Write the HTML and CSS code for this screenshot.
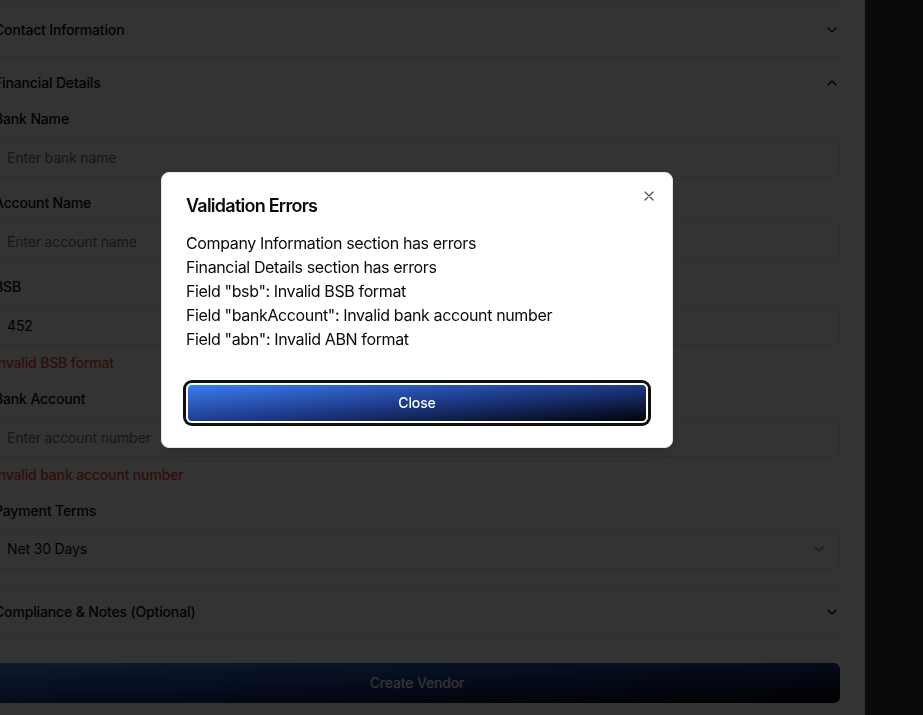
FILE: index.html
```html
<!DOCTYPE html>
<html lang="en">
<head>
<meta charset="utf-8">
<title>Create Vendor</title>
<link rel="stylesheet" href="styles.css">
</head>
<body>
<div class="page">
  <main class="card">
    <form class="form">
      <div class="acc-item">
        <button type="button" class="acc-trigger">Company Information
          <svg class="chev" viewBox="0 0 24 24" width="16" height="16"><path d="m6 9 6 6 6-6"/></svg>
        </button>
      </div>
      <div class="acc-item">
        <button type="button" class="acc-trigger">Contact Information
          <svg class="chev" viewBox="0 0 24 24" width="16" height="16"><path d="m6 9 6 6 6-6"/></svg>
        </button>
      </div>
      <div class="acc-item">
        <button type="button" class="acc-trigger">Financial Details
          <svg class="chev" viewBox="0 0 24 24" width="16" height="16"><path d="m18 15-6-6-6 6"/></svg>
        </button>
        <div class="acc-content">
          <div class="field">
            <label class="label">Bank Name</label>
            <input class="input" placeholder="Enter bank name">
          </div>
          <div class="field">
            <label class="label">Account Name</label>
            <input class="input" placeholder="Enter account name">
          </div>
          <div class="field">
            <label class="label">BSB</label>
            <input class="input" value="452">
            <p class="error">Invalid BSB format</p>
          </div>
          <div class="field">
            <label class="label">Bank Account</label>
            <input class="input" placeholder="Enter account number">
            <p class="error">Invalid bank account number</p>
          </div>
          <div class="field">
            <label class="label">Payment Terms</label>
            <button type="button" class="select">Net 30 Days
              <svg class="chev faint" viewBox="0 0 24 24" width="16" height="16"><path d="m6 9 6 6 6-6"/></svg>
            </button>
          </div>
        </div>
      </div>
      <div class="acc-item">
        <button type="button" class="acc-trigger">Compliance &amp; Notes (Optional)
          <svg class="chev" viewBox="0 0 24 24" width="16" height="16"><path d="m6 9 6 6 6-6"/></svg>
        </button>
      </div>
      <button type="button" class="submit">Create Vendor</button>
    </form>
  </main>
</div>

<div class="overlay"></div>

<div class="dialog" role="dialog">
  <h2 class="dialog-title">Validation Errors</h2>
  <ul class="error-list">
    <li>Company Information section has errors</li>
    <li>Financial Details section has errors</li>
    <li>Field "bsb": Invalid BSB format</li>
    <li>Field "bankAccount": Invalid bank account number</li>
    <li>Field "abn": Invalid ABN format</li>
  </ul>
  <button type="button" class="close-btn">Close</button>
  <button type="button" class="dialog-x" aria-label="Close">
    <svg viewBox="0 0 24 24" width="16" height="16"><path d="M18 6 6 18M6 6l12 12"/></svg>
  </button>
</div>
</body>
</html>
```
FILE: styles.css
```css
* { box-sizing: border-box; }

html, body {
  margin: 0;
  height: 100%;
  overflow: hidden;
}

body {
  background: #333333;
  font-family: Inter, "Noto Sans", sans-serif;
  color: #0a0a0a;
}

.card {
  width: 896px;
  margin: -74px 0 0 -31px;
  padding: 24px;
  background: #ffffff;
  border: 1px solid #e5e5e5;
  border-radius: 8px;
}

.form {
  display: flex;
  flex-direction: column;
}

.acc-item {
  border-bottom: 1px solid #e5e5e5;
}

.acc-trigger {
  display: flex;
  align-items: center;
  justify-content: space-between;
  width: 100%;
  padding: 16px 0;
  border: 0;
  background: none;
  font: 500 14px/20px Inter, "Noto Sans", sans-serif;
  letter-spacing: -0.15px;
  color: #0a0a0a;
  text-align: left;
}

.chev {
  flex: none;
  fill: none;
  stroke: #0a0a0a;
  stroke-width: 2;
  stroke-linecap: round;
  stroke-linejoin: round;
}

.chev.faint { opacity: 0.5; }

.acc-content {
  display: flex;
  flex-direction: column;
  gap: 16px;
  padding-bottom: 16px;
}

.field {
  display: flex;
  flex-direction: column;
  gap: 8px;
}

.label {
  font: 500 14px/20px Inter, "Noto Sans", sans-serif;
  letter-spacing: -0.15px;
}

.input,
.select {
  height: 40px;
  width: 100%;
  padding: 0 12px;
  border: 1px solid #e5e5e5;
  border-radius: 6px;
  background: #ffffff;
  font: 400 14px/20px Inter, "Noto Sans", sans-serif;
  letter-spacing: -0.15px;
  color: #0a0a0a;
}

.input::placeholder { color: #737373; }

.select {
  display: flex;
  align-items: center;
  justify-content: space-between;
  text-align: left;
}

.error {
  margin: 0;
  font: 500 14px/20px Inter, "Noto Sans", sans-serif;
  letter-spacing: -0.15px;
  color: #ef4444;
}

.submit {
  margin-top: 24px;
  height: 40px;
  width: 100%;
  border: 0;
  border-radius: 6px;
  background: linear-gradient(to bottom right, #3b82f6, #1e3a8a, #000000);
  color: #ffffff;
  font: 500 14px/20px Inter, "Noto Sans", sans-serif;
  letter-spacing: -0.15px;
}

.overlay {
  position: fixed;
  inset: 0;
  background: rgba(0, 0, 0, 0.8);
}

.dialog {
  position: fixed;
  left: 161px;
  top: 172px;
  width: 512px;
  padding: 24px;
  display: flex;
  flex-direction: column;
  gap: 16px;
  background: #ffffff;
  border: 1px solid #e5e5e5;
  border-radius: 8px;
  box-shadow: 0 10px 15px -3px rgba(0,0,0,0.1), 0 4px 6px -4px rgba(0,0,0,0.1);
}

.dialog-title {
  margin: 0;
  font: 600 18px/18px Inter, "Noto Sans", sans-serif;
  letter-spacing: -0.75px;
}

.error-list {
  margin: 0 0 16px;
  padding: 0;
  list-style: none;
  font: 400 16px/24px Inter, "Noto Sans", sans-serif;
  letter-spacing: -0.37px;
}

.close-btn {
  height: 40px;
  width: 100%;
  border: 0;
  border-radius: 6px;
  background: linear-gradient(to bottom right, #3b82f6, #1e3a8a, #000000);
  color: #ffffff;
  font: 500 14px/20px Inter, "Noto Sans", sans-serif;
  letter-spacing: -0.15px;
  box-shadow: inset 0 0 0 2px #ffffff, 0 0 0 3px #101010;
}

.dialog-x {
  position: absolute;
  top: 15px;
  right: 15px;
  width: 16px;
  height: 16px;
  padding: 0;
  border: 0;
  background: none;
  opacity: 0.7;
}

.dialog-x svg {
  display: block;
  fill: none;
  stroke: #0a0a0a;
  stroke-width: 2;
  stroke-linecap: round;
  stroke-linejoin: round;
}
```
